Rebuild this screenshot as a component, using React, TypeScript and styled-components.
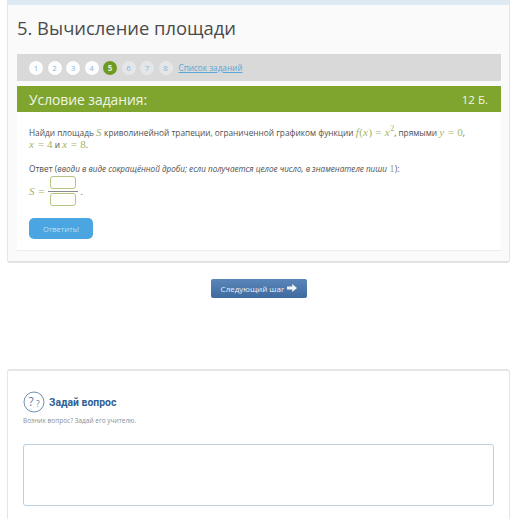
import React from "react";
import styled, { createGlobalStyle } from "styled-components";

const Global = createGlobalStyle`
  html, body { margin: 0; padding: 0; background: #fff; }
  body { width: 518px; height: 519px; overflow: hidden; font-family: "Open Sans", "Noto Sans", sans-serif; color: #555; }
`;
const Page = styled.div`
  display: flex;
  flex-direction: column;
  width: 518px;
  height: 519px;
  overflow: hidden;
`;
const TaskCard = styled.section`
  box-sizing: border-box;
  flex: none;
  width: 503px;
  height: 263px;
  margin-left: 7px;
  border-right: 1px solid #e6e6e6;
  border-left: 1px solid #e6e6e6;
  border-bottom: 2px solid #e2e2e2;
  border-radius: 0 0 3px 3px;
  background: #fafafa;
  display: flex;
  flex-direction: column;
`;
const TopStrip = styled.div`
  height: 5px;
  flex: none;
  background: #deeaf3;
`;
const Inner = styled.div`
  display: flex;
  flex-direction: column;
  padding: 0 8px 0 9px;
`;
const Title = styled.h1`
  margin: 0;
  height: 49px;
  display: flex;
  align-items: center;
  font-size: 18.4px;
  font-weight: 400;
  color: #4a4a4a;
  padding-bottom: 4px;
  box-sizing: border-box;
`;
const StepBar = styled.nav`
  height: 27px;
  background: #d9d9d9;
  display: flex;
  align-items: center;
  gap: 4.5px;
  padding-left: 12px;
`;
const Step = styled.span<{ $state: "done" | "active" | "todo" }>`
  width: 14px;
  height: 14px;
  border-radius: 50%;
  display: flex;
  align-items: center;
  justify-content: center;
  font-size: 8px;
  color: ${(p) => (p.$state === "active" ? "#e8f0d8" : "#8ab8d8")};
  background: ${(p) =>
    p.$state === "active" ? "#6f9a22" : p.$state === "done" ? "#fdfdfd" : "#e4e6e8"};
  font-weight: ${(p) => (p.$state === "active" ? 700 : 400)};
`;
const StepsLink = styled.a`
  margin-left: 1.5px;
  font-size: 8.2px;
  color: #5ba6d6;
  text-decoration: underline;
`;
const GreenHead = styled.header`
  margin-top: 5px;
  height: 26px;
  box-sizing: border-box;
  background: #7fa52f;
  display: flex;
  align-items: center;
  justify-content: space-between;
  padding: 0 13px 0 12px;
  color: #f1f5e6;
`;
const HeadTitle = styled.span`
  font-size: 13.8px;
`;
const HeadPoints = styled.span`
  font-size: 11.5px;
`;
const Body = styled.div`
  background: #fff;
  height: 139px;
  box-sizing: border-box;
  padding: 14px 12px 0 12px;
  border-bottom: 1px solid #ececec;
  display: flex;
  flex-direction: column;
  font-size: 8.3px;
  color: #4f4f4f;
`;
const Line = styled.div`
  height: 12px;
  line-height: 12px;
  white-space: nowrap;
`;
const Math = styled.span`
  font-family: "Liberation Serif", serif;
  font-size: 11px;
  word-spacing: 0.5px;
  color: #a0b566;
`;
const MathVar = styled.i`
  font-style: italic;
  padding-right: 0.5px;
`;
const Sup = styled.sup`
  font-size: 8px;
  line-height: 0;
`;
const AnswerLine = styled(Line)`
  margin-top: 12px;
`;
const Hint = styled.i`
  font-size: 8.15px;
`;
const Formula = styled.div`
  display: flex;
  align-items: center;
  gap: 4px;
  margin-top: 2px;
  height: 30px;
`;
const Fraction = styled.div`
  display: flex;
  flex-direction: column;
  align-items: center;
  width: 30px;
  gap: 1.5px;
`;
const FracBox = styled.div`
  box-sizing: border-box;
  width: 26px;
  height: 13px;
  border: 1px solid #b3c67e;
  border-radius: 3px;
  background: #fff;
`;
const FracRule = styled.div`
  width: 30px;
  height: 1px;
  background: #8a8a8a;
`;
const FormulaDot = styled.span`
  margin-left: -2px;
`;
const AnswerButton = styled.button`
  margin-top: 12px;
  width: 64px;
  height: 21px;
  border: 0;
  border-radius: 5px;
  background: #4aa5e0;
  color: #bfe0f5;
  font: 400 7.5px "Open Sans", sans-serif;
  padding: 0;
`;
const NextRow = styled.div`
  display: flex;
  flex: none;
  justify-content: center;
  margin-top: 16px;
`;
const NextButton = styled.button`
  width: 96px;
  height: 19px;
  border: 0;
  border-radius: 2px;
  background: linear-gradient(#5b86ba, #3f6a9f);
  color: #e8eff7;
  font: 400 8px "Open Sans", sans-serif;
  display: flex;
  align-items: center;
  justify-content: center;
  gap: 3px;
  padding: 0 0 1px;
`;
const AskCard = styled.section`
  box-sizing: border-box;
  flex: none;
  margin: 71px 0 0 7px;
  width: 503px;
  height: 161px;
  border: 1px solid #e6e6e6;
  border-top: 2px solid #e6e6e6;
  border-bottom: 0;
  border-radius: 3px 3px 0 0;
  padding: 20px 15px 0 15px;
  display: flex;
  flex-direction: column;
`;
const AskHead = styled.div`
  display: flex;
  align-items: center;
  gap: 4px;
`;
const AskTitle = styled.h2`
  margin: 0;
  font: 700 10.4px Roboto, sans-serif;
  color: #2f5f95;
`;
const AskSub = styled.p`
  margin: 3px 0 0;
  font-size: 6.5px;
  line-height: 10px;
  color: #8b8f93;
`;
const AskInput = styled.div`
  margin-top: 18px;
  width: 471px;
  height: 62px;
  box-sizing: border-box;
  border: 1px solid #bcd0e0;
  border-radius: 3px;
  background: #fff;
`;

const QuestionIcon = () => (
  <svg width="22" height="22" viewBox="0 0 22 22" fill="none">
    <circle cx="11" cy="11" r="10" stroke="#6f90b0" strokeWidth="1" />
    <text x="5.5" y="15" fontSize="12" fill="#5b82a8" fontFamily="Open Sans, sans-serif">?</text>
    <text x="13" y="15.5" fontSize="8.5" fill="#5b82a8" fontFamily="Open Sans, sans-serif">?</text>
  </svg>
);
const ArrowIcon = () => (
  <svg width="10" height="8" viewBox="0 0 10 8">
    <path d="M0 2.6h5.2V0L10 4 5.2 8V5.4H0z" fill="#f2f6fb" />
  </svg>
);

export default function App() {
  const steps = [1, 2, 3, 4, 5, 6, 7, 8];
  return (
    <Page>
      <Global />
      <TaskCard>
        <TopStrip />
        <Inner>
          <Title>5. Вычисление площади</Title>
          <StepBar>
            {steps.map((n) => (
              <Step key={n} $state={n === 5 ? "active" : n < 5 ? "done" : "todo"}>{n}</Step>
            ))}
            <StepsLink>Список заданий</StepsLink>
          </StepBar>
          <GreenHead>
            <HeadTitle>Условие задания:</HeadTitle>
            <HeadPoints>12 Б.</HeadPoints>
          </GreenHead>
          <Body>
            <Line>
              Найди площадь <Math><MathVar>S</MathVar></Math> криволинейной трапеции, ограниченной графиком функции{" "}
              <Math><MathVar>f</MathVar>(<MathVar>x</MathVar>) = <MathVar>x</MathVar><Sup>2</Sup></Math>, прямыми{" "}
              <Math><MathVar>y</MathVar> = 0</Math>,
            </Line>
            <Line>
              <Math><MathVar>x</MathVar> = 4</Math> и <Math><MathVar>x</MathVar> = 8</Math>.
            </Line>
            <AnswerLine>
              Ответ (<Hint>вводи в виде сокращённой дроби; если получается целое число, в знаменателе пиши</Hint> <Math>1</Math>):
            </AnswerLine>
            <Formula>
              <Math><MathVar>S</MathVar> =</Math>
              <Fraction>
                <FracBox />
                <FracRule />
                <FracBox />
              </Fraction>
              <FormulaDot>.</FormulaDot>
            </Formula>
            <AnswerButton>Ответить!</AnswerButton>
          </Body>
        </Inner>
      </TaskCard>
      <NextRow>
        <NextButton>Следующий шаг <ArrowIcon /></NextButton>
      </NextRow>
      <AskCard>
        <AskHead>
          <QuestionIcon />
          <AskTitle>Задай вопрос</AskTitle>
        </AskHead>
        <AskSub>Возник вопрос? Задай его учителю.</AskSub>
        <AskInput />
      </AskCard>
    </Page>
  );
}
